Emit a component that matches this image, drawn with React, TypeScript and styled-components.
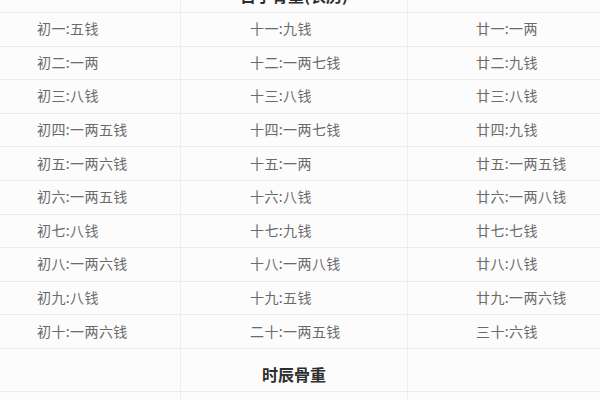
import React from "react";
import styled, { createGlobalStyle } from "styled-components";

const Global = createGlobalStyle`
  html, body { margin: 0; padding: 0; background: #fcfcfc; }
  body { font-family: "Noto Sans CJK SC", "Noto Sans", sans-serif; }
`;

const Page = styled.div`
  width: 600px;
  height: 400px;
  overflow: hidden;
  background: #fcfcfc;
`;

const Table = styled.div`
  margin-top: -30px;
  display: flex;
  flex-direction: column;
`;

const Row = styled.div<{ $head?: boolean }>`
  display: grid;
  grid-template-columns: 181px 227px 1fr;
  height: ${(p) => (p.$head ? "43px" : "33.6px")};
  box-sizing: border-box;
  border-bottom: 1px solid #ebebeb;
`;

const Cell = styled.div<{ $pad: number }>`
  display: flex;
  align-items: center;
  padding-left: ${(p) => p.$pad}px;
  padding-bottom: 2px;
  box-sizing: border-box;
  border-right: 1px solid #ededed;
  font-size: 14px;
  letter-spacing: 0.4px;
  color: #6a6a6a;
  white-space: nowrap;
  &:last-child { border-right: none; }
`;

const HeadCell = styled.div<{ $title?: boolean }>`
  display: flex;
  justify-content: center;
  align-items: flex-start;
  padding-top: 16px;
  box-sizing: border-box;
  border-right: 1px solid #ededed;
  font-size: 16px;
  line-height: 18px;
  font-weight: 700;
  color: #2e2e2e;
  &:last-child { border-right: none; }
`;

const col1 = ["初一:五钱", "初二:一两", "初三:八钱", "初四:一两五钱", "初五:一两六钱", "初六:一两五钱", "初七:八钱", "初八:一两六钱", "初九:八钱", "初十:一两六钱"];
const col2 = ["十一:九钱", "十二:一两七钱", "十三:八钱", "十四:一两七钱", "十五:一两", "十六:八钱", "十七:九钱", "十八:一两八钱", "十九:五钱", "二十:一两五钱"];
const col3 = ["廿一:一两", "廿二:九钱", "廿三:八钱", "廿四:九钱", "廿五:一两五钱", "廿六:一两八钱", "廿七:七钱", "廿八:八钱", "廿九:一两六钱", "三十:六钱"];

const Header = ({ title }: { title: string }) => (
  <Row $head>
    <HeadCell />
    <HeadCell $title>{title}</HeadCell>
    <HeadCell />
  </Row>
);

export default function App() {
  return (
    <Page>
      <Global />
      <Table>
        <Header title="日子骨重(农历)" />
        {col1.map((c, i) => (
          <Row key={i}>
            <Cell $pad={37}>{c}</Cell>
            <Cell $pad={69}>{col2[i]}</Cell>
            <Cell $pad={68}>{col3[i]}</Cell>
          </Row>
        ))}
        <Header title="时辰骨重" />
        <Row>
          <Cell $pad={37} />
          <Cell $pad={69} />
          <Cell $pad={68} />
        </Row>
      </Table>
    </Page>
  );
}
